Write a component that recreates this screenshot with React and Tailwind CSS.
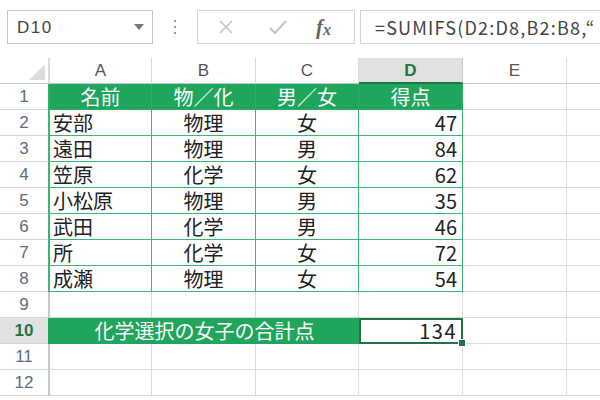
import React from 'react';

const rows = [
    ['安部', '物理', '女', 47],
    ['遠田', '物理', '男', 84],
    ['笠原', '化学', '女', 62],
    ['小松原', '物理', '男', 35],
    ['武田', '化学', '男', 46],
    ['所', '化学', '女', 72],
    ['成瀬', '物理', '女', 54],
];

const cellFont = { fontFamily: '"Noto Sans CJK JP", "Noto Sans", sans-serif' };
const headFont = { fontFamily: '"Liberation Sans", Arial, sans-serif' };

const RowNum = ({ n, active }) => (
    <div
        style={headFont}
        className={active
            ? 'w-[48px] shrink-0 h-full flex items-center justify-center border-b border-[#d4d4d4] bg-[#e1e1e1] text-[17px] leading-none font-bold text-[#217346]'
            : 'w-[48px] shrink-0 h-full flex items-center justify-center border-b border-[#d4d4d4] text-[17px] leading-none text-[#5b6b85]'}
    >
        {n}
    </div>
);

const EmptyCells = () => (
    <>
        <div className="w-[104px] shrink-0 h-full border-l-2 border-r border-b border-l-[#c8c8c8] border-r-[#dadada] border-b-[#dadada]" />
        <div className="w-[104px] shrink-0 h-full border-r border-b border-[#dadada]" />
        <div className="w-[103px] shrink-0 h-full border-r border-b border-[#dadada]" />
        <div className="w-[104px] shrink-0 h-full border-r border-b border-[#dadada]" />
        <div className="w-[104px] shrink-0 h-full border-r border-b border-[#dadada]" />
        <div className="flex-1 h-full border-b border-[#dadada]" />
    </>
);

export default function App() {
    return (
        <div className="w-[600px] h-[400px] overflow-hidden bg-white flex flex-col">
            {/* formula bar */}
            <div className="h-[58px] shrink-0 flex items-start pt-[10px]" style={headFont}>
                <div className="ml-[7px] w-[146px] h-[34px] border border-[#c6c6c6] flex items-center pl-[9px] pr-[8px]">
                    <span className="text-[17px] leading-none text-[#444] tracking-[1.5px]">D10</span>
                    <span className="ml-auto w-0 h-0 border-l-[5px] border-r-[5px] border-t-[6px] border-l-transparent border-r-transparent border-t-[#777]" />
                </div>
                <div className="w-[44px] h-[34px] flex flex-col items-center justify-center gap-[4px]">
                    <span className="w-[2px] h-[2px] bg-[#999]" />
                    <span className="w-[2px] h-[2px] bg-[#999]" />
                    <span className="w-[2px] h-[2px] bg-[#999]" />
                </div>
                <div className="w-[158px] h-[34px] border border-[#d4d4d4] flex items-center">
                    <svg width="20" height="20" viewBox="0 0 20 20" className="ml-[18px]">
                        <path d="M4 4 L16 16 M16 4 L4 16" stroke="#c4c4c4" strokeWidth="1.6" fill="none" />
                    </svg>
                    <svg width="22" height="20" viewBox="0 0 22 20" className="ml-[31px]">
                        <path d="M3 11 L8 16 L19 4" stroke="#c4c4c4" strokeWidth="2" fill="none" />
                    </svg>
                    <span className="ml-[27px] text-[#666] italic font-bold text-[21px] leading-none" style={{ fontFamily: '"Liberation Serif", serif' }}>
                        f<span className="text-[16px] relative top-[1px]">x</span>
                    </span>
                </div>
                <div className="ml-[5px] flex-1 h-[34px] border border-r-0 border-[#d4d4d4] flex items-center pl-[14px] overflow-hidden whitespace-nowrap">
                    <span className="text-[18px] leading-none text-[#444] tracking-[1.2px]" style={cellFont}>=SUMIFS(D2:D8,B2:B8,“</span>
                </div>
            </div>

            {/* column header */}
            <div className="h-[26px] shrink-0 flex text-[17px] leading-none" style={headFont}>
                <div className="w-[48px] shrink-0 h-full border-b border-[#c8c8c8] flex items-end justify-end pr-[3px] pb-[3px]">
                    <svg width="16" height="16" viewBox="0 0 16 16">
                        <path d="M16 0 L16 16 L0 16 Z" fill="#dcdcdc" />
                    </svg>
                </div>
                <div className="w-[104px] shrink-0 h-full border-l-2 border-r border-b border-l-[#dadada] border-r-[#dadada] border-b-[#c8c8c8] flex items-center justify-center text-[#555]">A</div>
                <div className="w-[104px] shrink-0 h-full border-r border-b border-r-[#dadada] border-b-[#c8c8c8] flex items-center justify-center text-[#555]">B</div>
                <div className="w-[103px] shrink-0 h-full border-r border-b border-r-[#dadada] border-b-[#c8c8c8] flex items-center justify-center text-[#555]">C</div>
                <div className="w-[104px] shrink-0 h-full border-r border-b-2 border-r-[#c8c8c8] border-b-[#217346] bg-[#e1e1e1] flex items-center justify-center font-bold text-[#217346]">D</div>
                <div className="w-[104px] shrink-0 h-full border-r border-b border-r-[#dadada] border-b-[#c8c8c8] flex items-center justify-center text-[#555]">E</div>
                <div className="flex-1 h-full border-b border-[#c8c8c8]" />
            </div>

            {/* row 1: table header */}
            <div className="h-[26px] shrink-0 flex text-[20px] leading-none text-white" style={cellFont}>
                <RowNum n={1} />
                <div className="w-[104px] shrink-0 h-full border-l-2 border-r border-b border-[#2fae66] bg-[#1fa55c] flex items-center justify-center">名前</div>
                <div className="w-[104px] shrink-0 h-full border-r border-b border-[#2fae66] bg-[#1fa55c] flex items-center justify-center">物／化</div>
                <div className="w-[103px] shrink-0 h-full border-r border-b border-[#2fae66] bg-[#1fa55c] flex items-center justify-center">男／女</div>
                <div className="w-[104px] shrink-0 h-full border-r border-b border-[#2fae66] bg-[#1fa55c] flex items-center justify-center">得点</div>
                <div className="w-[104px] shrink-0 h-full border-r border-b border-[#dadada]" />
                <div className="flex-1 h-full border-b border-[#dadada]" />
            </div>

            {/* rows 2-8 */}
            {rows.map((r, i) => (
                <div key={i} className="h-[26px] shrink-0 flex text-[20px] leading-none text-[#222]" style={cellFont}>
                    <RowNum n={i + 2} />
                    <div className="w-[104px] shrink-0 h-full border-l-2 border-r border-b border-[#3db673] flex items-center pl-[3px]">{r[0]}</div>
                    <div className="w-[104px] shrink-0 h-full border-r border-b border-[#3db673] flex items-center justify-center">{r[1]}</div>
                    <div className="w-[103px] shrink-0 h-full border-r border-b border-[#3db673] flex items-center justify-center">{r[2]}</div>
                    <div className="w-[104px] shrink-0 h-full border-r border-b border-[#3db673] flex items-center justify-end pr-[5px]">{r[3]}</div>
                    <div className="w-[104px] shrink-0 h-full border-r border-b border-[#dadada]" />
                    <div className="flex-1 h-full border-b border-[#dadada]" />
                </div>
            ))}

            {/* row 9 */}
            <div className="h-[26px] shrink-0 flex">
                <RowNum n={9} />
                <EmptyCells />
            </div>

            {/* row 10 */}
            <div className="h-[26px] shrink-0 flex text-[20px] leading-none" style={cellFont}>
                <RowNum n={10} active />
                <div className="w-[311px] shrink-0 h-full border-l-2 border-b border-[#1fa55c] bg-[#1fa55c] flex items-center justify-center text-white">
                    化学選択の女子の合計点
                </div>
                <div className="relative w-[104px] shrink-0 h-full border-2 border-[#217346] flex items-center justify-end pr-[4px] text-[#222] tracking-[1.5px]">
                    134
                    <span className="absolute -right-[5px] -bottom-[5px] w-[8px] h-[8px] bg-[#217346] border border-white" />
                </div>
                <div className="w-[104px] shrink-0 h-full border-r border-b border-[#dadada]" />
                <div className="flex-1 h-full border-b border-[#dadada]" />
            </div>

            {/* rows 11-12 */}
            <div className="h-[26px] shrink-0 flex">
                <RowNum n={11} />
                <EmptyCells />
            </div>
            <div className="h-[26px] shrink-0 flex">
                <RowNum n={12} />
                <EmptyCells />
            </div>
        </div>
    );
}
